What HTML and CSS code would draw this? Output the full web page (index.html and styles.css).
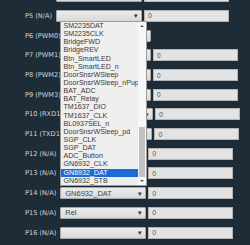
FILE: index.html
```html
<!DOCTYPE html>
<html>
<head>
<meta charset="utf-8">
<link rel="stylesheet" href="styles.css">
</head>
<body>
<div class="page">
  <div class="rows">
    <div class="row"><span class="lbl">P4 (N/A)</span><div class="sel"><span class="val"></span><span class="arr">▾</span></div><input class="num" type="text" value="0"></div>
    <div class="row"><span class="lbl">P5 (N/A)</span><div class="sel"><span class="val"></span><span class="arr">▾</span></div><input class="num" type="text" value="0"></div>
    <div class="row"><span class="lbl">P6 (PWM0)</span><div class="sel"><span class="val"></span><span class="arr">▾</span></div></div>
    <div class="row"><span class="lbl">P7 (PWM1)</span><div class="sel"><span class="val"></span><span class="arr">▾</span></div><input class="num" type="text" value="0"></div>
    <div class="row"><span class="lbl">P8 (PWM2)</span><div class="sel"><span class="val"></span><span class="arr">▾</span></div><input class="num" type="text" value="0"></div>
    <div class="row"><span class="lbl">P9 (PWM3)</span><div class="sel"><span class="val"></span><span class="arr">▾</span></div><input class="num" type="text" value="0"></div>
    <div class="row"><span class="lbl">P10 (RXD1)</span><div class="sel"><span class="val"></span><span class="arr">▾</span></div><input class="num" type="text" value="0"></div>
    <div class="row"><span class="lbl">P11 (TXD1)</span><div class="sel"><span class="val"></span><span class="arr">▾</span></div><input class="num" type="text" value="0"></div>
    <div class="row"><span class="lbl">P12 (N/A)</span><div class="sel"><span class="val"></span><span class="arr">▾</span></div><input class="num" type="text" value="0"></div>
    <div class="row"><span class="lbl">P13 (N/A)</span><div class="sel"><span class="val"></span><span class="arr">▾</span></div><input class="num" type="text" value="0"></div>
    <div class="row"><span class="lbl">P14 (N/A)</span><div class="sel"><span class="val">GN6932_DAT</span><span class="arr">▾</span></div><input class="num" type="text" value="0"></div>
    <div class="row"><span class="lbl">P15 (N/A)</span><div class="sel"><span class="val">Rel</span><span class="arr">▾</span></div><input class="num" type="text" value="0"></div>
    <div class="row"><span class="lbl">P16 (N/A)</span><div class="sel"><span class="val"></span><span class="arr">▾</span></div><input class="num" type="text" value="0"></div>
  </div>

  <div class="list">
    <div class="opts">
      <div class="opt">SM2235DAT</div>
      <div class="opt">SM2235CLK</div>
      <div class="opt">BridgeFWD</div>
      <div class="opt">BridgeREV</div>
      <div class="opt">Btn_SmartLED</div>
      <div class="opt">Btn_SmartLED_n</div>
      <div class="opt">DoorSnsrWSleep</div>
      <div class="opt">DoorSnsrWSleep_nPup</div>
      <div class="opt">BAT_ADC</div>
      <div class="opt">BAT_Relay</div>
      <div class="opt">TM1637_DIO</div>
      <div class="opt">TM1637_CLK</div>
      <div class="opt">BL0937SEL_n</div>
      <div class="opt">DoorSnsrWSleep_pd</div>
      <div class="opt">SGP_CLK</div>
      <div class="opt">SGP_DAT</div>
      <div class="opt">ADC_Button</div>
      <div class="opt">GN6932_CLK</div>
      <div class="opt active">GN6932_DAT</div>
      <div class="opt">GN6932_STB</div>
    </div>
    <div class="sb">
      <div class="sb-btn"><span class="tri-up"></span></div>
      <div class="sb-track"></div>
      <div class="sb-thumb"></div>
      <div class="sb-btn"><span class="tri-down"></span></div>
    </div>
  </div>
</div>
</body>
</html>
```

FILE: styles.css
```css
html, body {
  margin: 0;
  padding: 0;
}
body {
  background: #1e2c38;
  width: 250px;
  height: 245px;
  overflow: hidden;
  font-family: "DejaVu Sans", sans-serif;
}
.page {
  position: relative;
  display: flow-root;
  padding-left: 25px;
}
.rows {
  margin-top: -13.55px;
}
.row {
  display: flex;
  align-items: center;
  height: 19.7px;
}
.lbl {
  font-size: 6.6px;
  color: #cfd5db;
  margin-right: 4px;
  white-space: nowrap;
}
.sel {
  width: 86px;
  height: 12px;
  box-sizing: border-box;
  border: 1px solid #a8a8a8;
  border-radius: 1px;
  background: linear-gradient(#ececec, #d9d9d9);
  display: flex;
  align-items: center;
  justify-content: space-between;
  padding: 0 3px 0 4px;
  font-family: "Liberation Sans", Arial, sans-serif;
  font-size: 7.5px;
  color: #444;
  flex-shrink: 0;
}
.arr {
  font-size: 7px;
  color: #333;
  line-height: 1;
}
.num {
  width: 85px;
  height: 12px;
  box-sizing: border-box;
  margin: 0 0 0 2px;
  border: 1px solid #b5b5b5;
  background: #e3e3e3;
  padding: 0 0 0 3px;
  font-family: "Liberation Sans", Arial, sans-serif;
  font-size: 7px;
  color: #555;
  outline: none;
  flex-shrink: 0;
}
.list {
  position: absolute;
  left: 60px;
  top: 21px;
  width: 87px;
  height: 165px;
  box-sizing: border-box;
  border: 1px solid #9a9a9a;
  background: #efefef;
  display: flex;
}
.opts {
  flex: 1;
  min-width: 0;
  overflow: hidden;
}
.opt {
  height: 8.15px;
  line-height: 8.15px;
  padding-left: 2.5px;
  font-family: "Liberation Sans", Arial, sans-serif;
  font-size: 7.1px;
  color: #3a3a3a;
  white-space: nowrap;
  overflow: hidden;
}
.opt.active {
  background: #1d6bd6;
  color: #ffffff;
}
.sb {
  width: 8px;
  display: flex;
  flex-direction: column;
  background: #f7f7f7;
}
.sb-btn {
  height: 8px;
  display: flex;
  align-items: center;
  justify-content: center;
}
.tri-up {
  width: 0;
  height: 0;
  border-left: 2px solid transparent;
  border-right: 2px solid transparent;
  border-bottom: 2px solid #555;
}
.tri-down {
  width: 0;
  height: 0;
  border-left: 2px solid transparent;
  border-right: 2px solid transparent;
  border-top: 2px solid #555;
}
.sb-track {
  flex: 1;
}
.sb-thumb {
  height: 50px;
  margin: 0 1px;
  background: #c2c2c2;
}
```
